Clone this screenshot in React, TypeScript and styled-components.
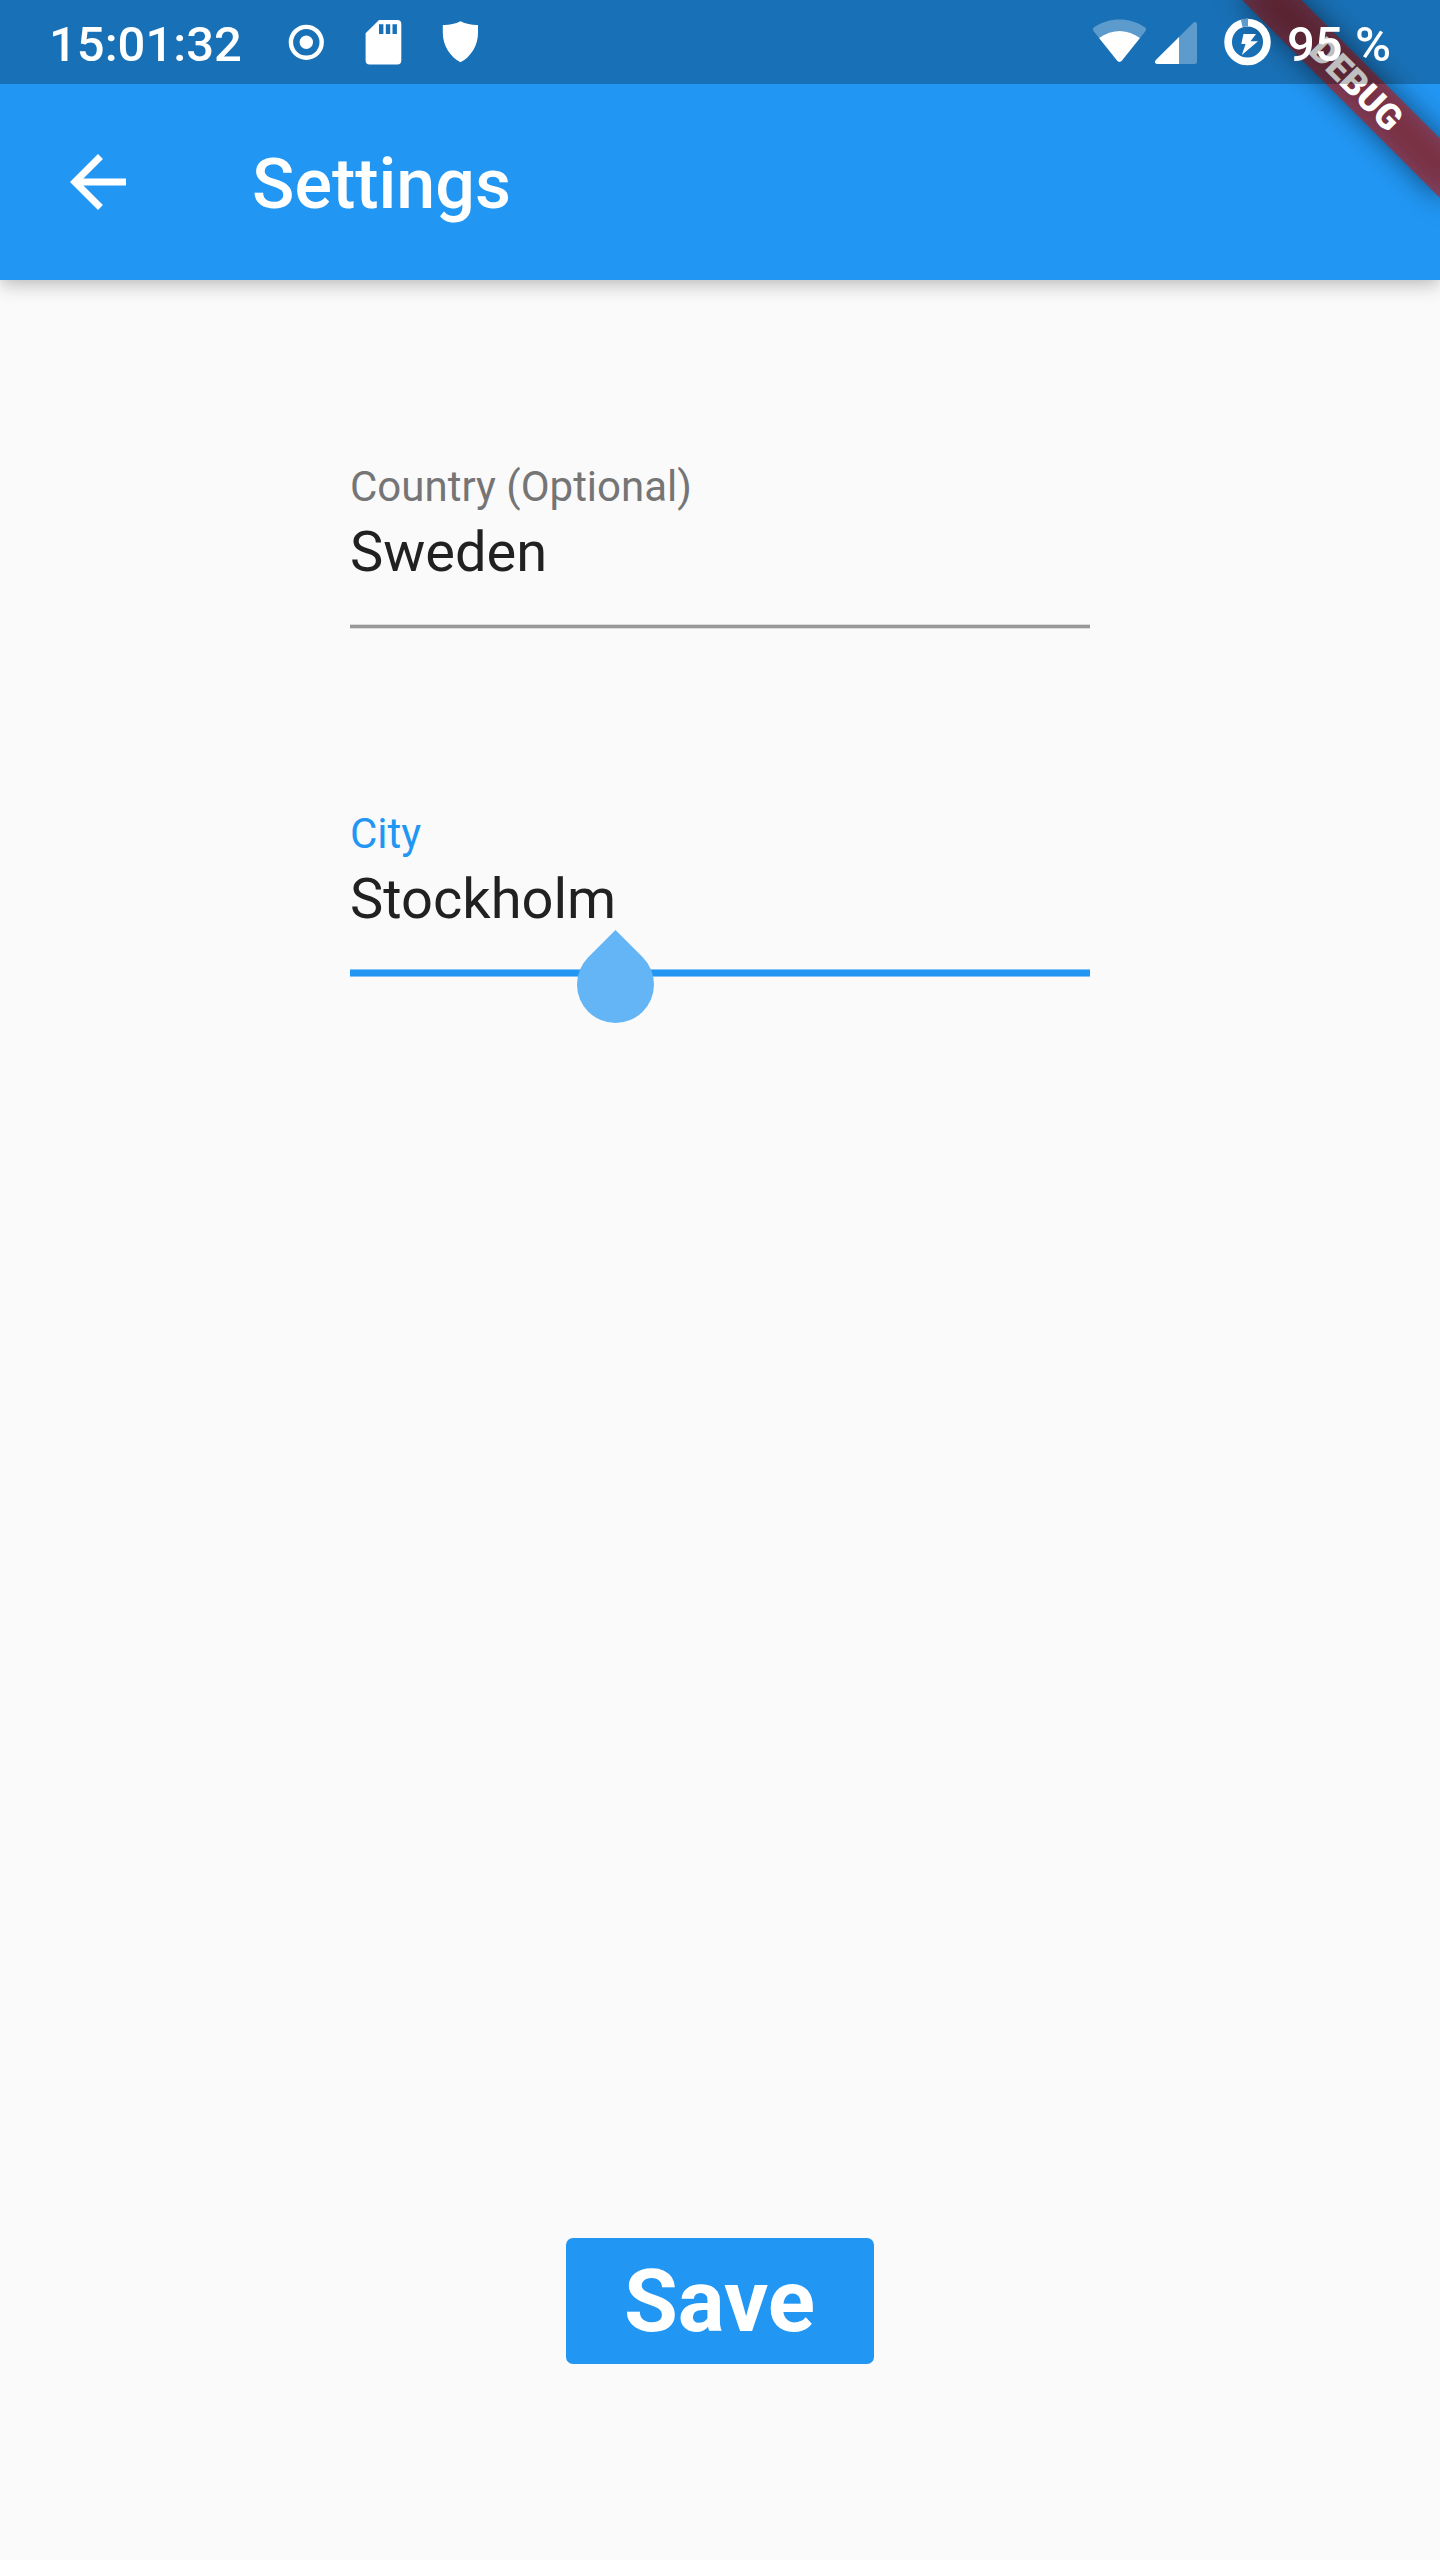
import React from 'react';
import styled, { createGlobalStyle } from 'styled-components';

const GlobalStyle = createGlobalStyle`
  * { box-sizing: border-box; }
  body { margin: 0; background: #fafafa; }
`;

const Screen = styled.div`
  position: relative;
  display: flex;
  flex-direction: column;
  width: 1440px;
  height: 2560px;
  overflow: hidden;
  background: #fafafa;
  font-family: Roboto, 'Noto Sans', sans-serif;
`;

const Header = styled.header`
  display: flex;
  flex-direction: column;
  flex: none;
  height: 280px;
  background: #2196f3;
  box-shadow: 0 7px 18px -1px rgba(0, 0, 0, 0.2), 0 3px 10px rgba(0, 0, 0, 0.06);
`;

const StatusBar = styled.div`
  position: relative;
  z-index: 2;
  display: flex;
  align-items: center;
  flex: none;
  height: 84px;
  padding: 0 50px 0 49px;
  background: rgba(0, 0, 0, 0.25);
  color: #fff;
`;

const StatusText = styled.span<{ $width: number; $gap?: number }>`
  width: ${(p) => p.$width}px;
  margin-left: ${(p) => p.$gap ?? 0}px;
  padding-top: 6px;
  font-size: 49px;
  font-weight: 500;
  line-height: 84px;
  white-space: nowrap;
`;

const StatusIcon = styled.svg<{ $gap: number }>`
  display: block;
  flex: none;
  height: 84px;
  margin-left: ${(p) => p.$gap}px;
  fill: #fff;
`;

const StatusEnd = styled.div`
  display: flex;
  align-items: center;
  margin-left: auto;
`;

const Toolbar = styled.div`
  display: flex;
  align-items: center;
  height: 196px;
  padding-left: 56px;
  color: #fff;
`;

const BackButton = styled.button`
  display: block;
  width: 84px;
  height: 84px;
  padding: 0;
  border: 0;
  background: none;
  color: inherit;
`;

const Title = styled.h1`
  margin: 4px 0 0 112px;
  font-size: 70px;
  line-height: 82px;
  font-weight: 500;
`;

const Form = styled.form`
  display: flex;
  flex-direction: column;
  align-items: center;
  flex: 1;
  padding-top: 182px;
`;

const Field = styled.div`
  position: relative;
  width: 740px;
  height: 347px;
`;

const Label = styled.label<{ $active?: boolean }>`
  display: block;
  height: 57px;
  font-size: 42px;
  line-height: 49px;
  color: ${(p) => (p.$active ? '#2196f3' : '#757575')};
`;

const Value = styled.div`
  height: 65px;
  font-size: 56px;
  line-height: 66px;
  color: #212121;
`;

const Underline = styled.div<{ $active?: boolean }>`
  height: ${(p) => (p.$active ? 8 : 5)}px;
  margin-top: ${(p) => (p.$active ? 38 : 40)}px;
  background: ${(p) => (p.$active ? '#2196f3' : '#989898')};
  border: solid ${(p) => (p.$active ? '#84c3f7' : '#dcdcdc')};
  border-width: 1px 0;
`;

const Handle = styled.span`
  position: absolute;
  left: 227.3px;
  top: 136.6px;
  width: 77px;
  height: 77px;
  border-radius: 0 50% 50% 50%;
  background: #64b5f6;
  transform: rotate(45deg);
`;

const SaveButton = styled.button`
  width: 308px;
  height: 126px;
  margin: auto 0 196px;
  padding: 0 1px 0 0;
  border: 0;
  border-radius: 7px;
  background: #2196f3;
  color: #fff;
  font-family: inherit;
  font-size: 87.5px;
  font-weight: 700;
  line-height: 126px;
`;

const RibbonLayer = styled.div`
  position: absolute;
  z-index: 1;
  left: 1440px;
  top: 0;
  width: 0;
  height: 0;
  transform: rotate(45deg);
  pointer-events: none;
`;

const RibbonShadow = styled.div`
  position: absolute;
  left: -140px;
  top: 98px;
  width: 280px;
  height: 42px;
  background: rgba(0, 0, 0, 0.5);
  filter: blur(13.9px);
`;

const Ribbon = styled.div`
  position: absolute;
  left: -140px;
  top: 98px;
  width: 280px;
  height: 42px;
  padding-left: 1px;
  background: rgba(183, 28, 28, 0.627);
  color: #fff;
  font-size: 35.7px;
  font-weight: 900;
  line-height: 42px;
  text-align: center;
`;

export default function App() {
  return (
    <>
      <GlobalStyle />
      <Screen>
        <Header>
          <StatusBar>
            <StatusText $width={194}>15:01:32</StatusText>
            <StatusIcon $gap={45} width="37" viewBox="288 0 37 84">
              <circle cx="306.3" cy="42.3" r="15.4" fill="none" stroke="#fff" strokeWidth="4.4" />
              <circle cx="306.3" cy="42.3" r="6.7" />
            </StatusIcon>
            <StatusIcon $gap={40} width="37" viewBox="365 0 37 84">
              <path
                fillRule="evenodd"
                d="M379 20H397.3a4 4 0 0 1 4 4V60.5a4 4 0 0 1-4 4H369.6a4 4 0 0 1-4-4V33.3ZM379 24.3v9.6h4.4v-9.6ZM385.8 24.3v9.6h4.4v-9.6ZM392.5 24.3v9.6h4.4v-9.6Z"
              />
            </StatusIcon>
            <StatusIcon $gap={40} width="37" viewBox="442 0 37 84">
              <path d="M442.8 25Q452 25.3 460.5 21.3Q469 25.3 478 25V33C478 45 471 57 460.5 62.3C450 57 442.8 45 442.8 33Z" />
            </StatusIcon>
            <StatusEnd>
              <StatusIcon $gap={0} width="54" viewBox="1093 0 54 84">
                <path
                  fillOpacity="0.3"
                  d="M1093.5 31Q1092 28.5 1094.5 27C1109 17 1130 17 1144.5 27Q1147 28.5 1145.5 31L1140 38C1127 28.5 1112 28.5 1099 38Z"
                />
                <path d="M1099 38C1112 28.5 1127 28.5 1140 38L1122 60.5Q1119.5 63.3 1117 60.5Z" />
              </StatusIcon>
              <StatusIcon $gap={8} width="43" viewBox="1155 0 43 84">
                <path fillOpacity="0.3" d="M1179 37L1193.3 22.8Q1197 20.5 1197 24.5V61.5Q1197 64 1194.5 64H1179Z" />
                <path d="M1179 37V64H1157Q1153.5 63 1155.8 60Z" />
              </StatusIcon>
              <StatusIcon $gap={26} width="47" viewBox="1224 0 47 84">
                <circle cx="1247.5" cy="42" r="19.4" fill="none" stroke="#fff" strokeWidth="7.7" />
                <path fill="#5e9bcd" d="M1240.8 19.3L1248 18.5V26.3L1242.5 27Z" />
                <path d="M1243.5 34H1256L1250.5 41.3H1258L1241.8 55L1245.6 44H1241.3Z" />
              </StatusIcon>
              <StatusText $width={103} $gap={16}>
                95 %
              </StatusText>
            </StatusEnd>
          </StatusBar>
          <Toolbar>
            <BackButton type="button" aria-label="Back">
              <svg width="84" height="84" viewBox="0 0 24 24" fill="currentColor">
                <path d="M20 11H7.83l5.59-5.59L12 4l-8 8 8 8 1.41-1.41L7.83 13H20v-2z" />
              </svg>
            </BackButton>
            <Title>Settings</Title>
          </Toolbar>
        </Header>
        <Form>
          <Field>
            <Label>Country (Optional)</Label>
            <Value>Sweden</Value>
            <Underline />
          </Field>
          <Field>
            <Label $active>City</Label>
            <Value>Stockholm</Value>
            <Underline $active />
            <Handle />
          </Field>
          <SaveButton type="button">Save</SaveButton>
        </Form>
        <RibbonLayer>
          <RibbonShadow />
          <Ribbon>DEBUG</Ribbon>
        </RibbonLayer>
      </Screen>
    </>
  );
}
